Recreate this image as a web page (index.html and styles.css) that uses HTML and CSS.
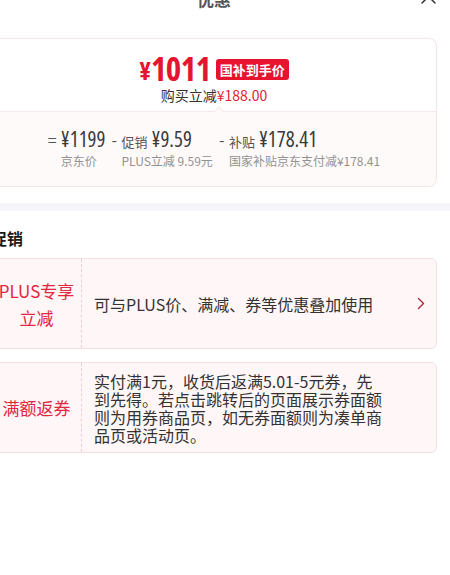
FILE: index.html
```html
<!DOCTYPE html>
<html lang="zh-CN">
  <head>
    <meta charset="UTF-8" />
    <meta name="viewport" content="width=device-width, initial-scale=1.0" />
    <title>优惠</title>
    <link rel="stylesheet" href="styles.css">
  </head>
  <body>
    <div class="sheet">
      <div class="sheet-head">
        <h2 class="sheet-title">优惠</h2>
        <span class="close">
          <svg width="15" height="15" viewBox="0 0 15 15">
            <path d="M1 1L14 14M14 1L1 14" stroke="#333" stroke-width="1.5" fill="none" stroke-linecap="round" />
          </svg>
        </span>
      </div>

      <div class="price-card">
        <div class="price-main">
          <div class="final-price">
            <span class="yen">¥</span><span class="num">1011</span>
            <span class="tag">国补到手价</span>
          </div>
          <div class="save">购买立减<em>¥188.00</em></div>
          <i class="notch"></i>
        </div>
        <div class="price-calc">
          <div class="calc-col">
            <span class="op op-eq">=</span>
            <div>
              <div class="calc-top"><span class="val">¥1199</span></div>
              <div class="calc-sub">京东价</div>
            </div>
          </div>
          <div class="calc-col">
            <span class="op">-</span>
            <div>
              <div class="calc-top"><span class="lbl">促销</span><span class="val">¥9.59</span></div>
              <div class="calc-sub">PLUS立减 9.59元</div>
            </div>
          </div>
          <div class="calc-col">
            <span class="op">-</span>
            <div>
              <div class="calc-top"><span class="lbl">补贴</span><span class="val">¥178.41</span></div>
              <div class="calc-sub">国家补贴京东支付减¥178.41</div>
            </div>
          </div>
        </div>
      </div>

      <div class="band"></div>

      <div class="promo">
        <h3 class="promo-title">促销</h3>
        <div class="promo-item">
          <div class="promo-name">PLUS专享<br />立减</div>
          <div class="promo-desc">可与PLUS价、满减、券等优惠叠加使用</div>
          <svg class="arrow" width="8" height="13" viewBox="0 0 8 13">
            <path d="M1.5 1.5L6.5 6.5L1.5 11.5" stroke="#a8243a" stroke-width="1.4" fill="none" stroke-linecap="round" stroke-linejoin="round" />
          </svg>
        </div>
        <div class="promo-item">
          <div class="promo-name">满额返券</div>
          <div class="promo-desc promo-desc-long">实付满1元，收货后返满5.01-5元券，先到先得。若点击跳转后的页面展示券面额则为用券商品页，如无券面额则为凑单商品页或活动页。</div>
        </div>
      </div>
    </div>
  </body>
</html>
```

FILE: styles.css
```css
html,
body {
  margin: 0;
  padding: 0;
  background-color: white;
  overflow: hidden;
}
body {
  font-family: "Noto Sans CJK SC", "Noto Sans", sans-serif;
  color: #333;
}
.sheet {
  width: 472px;
  margin-left: -22px;
}
.sheet-head {
  position: relative;
  height: 30px;
  margin-top: -16px;
  margin-bottom: 24px;
  display: flex;
  align-items: center;
  justify-content: center;
}
.sheet-title {
  margin: 0;
  font-size: 17px;
  line-height: 24px;
  font-weight: bold;
  color: #555;
}
.close {
  position: absolute;
  top: 5px;
  right: 14px;
  display: flex;
}
.price-card {
  margin: 0 13px;
  border: 1px solid #f3e4e6;
  border-radius: 8px;
  overflow: hidden;
}
.price-main {
  position: relative;
  padding: 11px 0 6px;
  text-align: center;
  border-bottom: 1px solid #f5e8ea;
}
.final-price {
  display: flex;
  align-items: center;
  justify-content: center;
  height: 36px;
  color: #e4152e;
  font-family: "Open Sans", "Roboto", sans-serif;
  font-stretch: 75%;
  font-weight: bold;
}
.yen {
  font-size: 25px;
  margin-top: 3px;
}
.num {
  font-size: 33px;
  letter-spacing: -0.5px;
}
.tag {
  margin-left: 5px;
  padding: 0 4px;
  height: 21px;
  line-height: 21px;
  border-radius: 3px;
  background-color: #e8132f;
  color: white;
  font-family: "Noto Sans CJK SC", sans-serif;
  font-stretch: normal;
  font-size: 13px;
  margin-top: 2px;
}
.save {
  font-size: 14px;
  line-height: 19px;
  color: #333;
}
.save em {
  font-style: normal;
  color: #e4213a;
}
.notch {
  position: absolute;
  left: calc(50% + 1px);
  bottom: -5px;
  width: 7px;
  height: 7px;
  background-color: #fffafa;
  border-top: 1px solid #f5e8ea;
  border-left: 1px solid #f5e8ea;
  transform: rotate(45deg);
}
.price-calc {
  display: flex;
  justify-content: center;
  gap: 6px;
  padding: 14px 0 16px;
  background-color: #fffafa;
}
.calc-col {
  display: flex;
}
.op {
  width: 10px;
  font-size: 16px;
  line-height: 26px;
  color: #555;
}
.op-eq {
  width: 13px;
}
.calc-top {
  display: flex;
  align-items: baseline;
  height: 26px;
  line-height: 26px;
}
.lbl {
  font-size: 13px;
  color: #555;
  margin-right: 4px;
}
.val {
  font-family: "Open Sans", "Roboto", sans-serif;
  font-stretch: 75%;
  font-size: 21px;
  font-weight: 500;
  color: #3a3a3a;
}
.calc-sub {
  font-size: 12px;
  line-height: 18px;
  color: #929292;
}
.band {
  height: 8px;
  margin-top: 16px;
  background-color: #f6f6fa;
}
.promo {
  padding: 0 13px;
}
.promo-title {
  margin: 16px 0 9px;
  font-size: 16px;
  line-height: 22px;
  font-weight: bold;
  color: #1a1a1a;
}
.promo-item {
  display: flex;
  align-items: center;
  min-height: 89px;
  margin-bottom: 13px;
  border: 1px solid #f4e0e3;
  border-radius: 6px;
  background-color: #fff6f7;
}
.promo-name {
  align-self: stretch;
  display: flex;
  align-items: center;
  justify-content: center;
  flex: 0 0 89px;
  border-right: 1px dashed #eccfd4;
  text-align: center;
  font-size: 17px;
  line-height: 27px;
  color: #e4253f;
}
.promo-desc {
  flex: 1;
  padding: 0 10px 0 12px;
  font-size: 16px;
  line-height: 22px;
  color: #333;
}
.promo-desc-long {
  padding-right: 48px;
  line-height: 18px;
}
.arrow {
  margin-right: 11px;
}
```
